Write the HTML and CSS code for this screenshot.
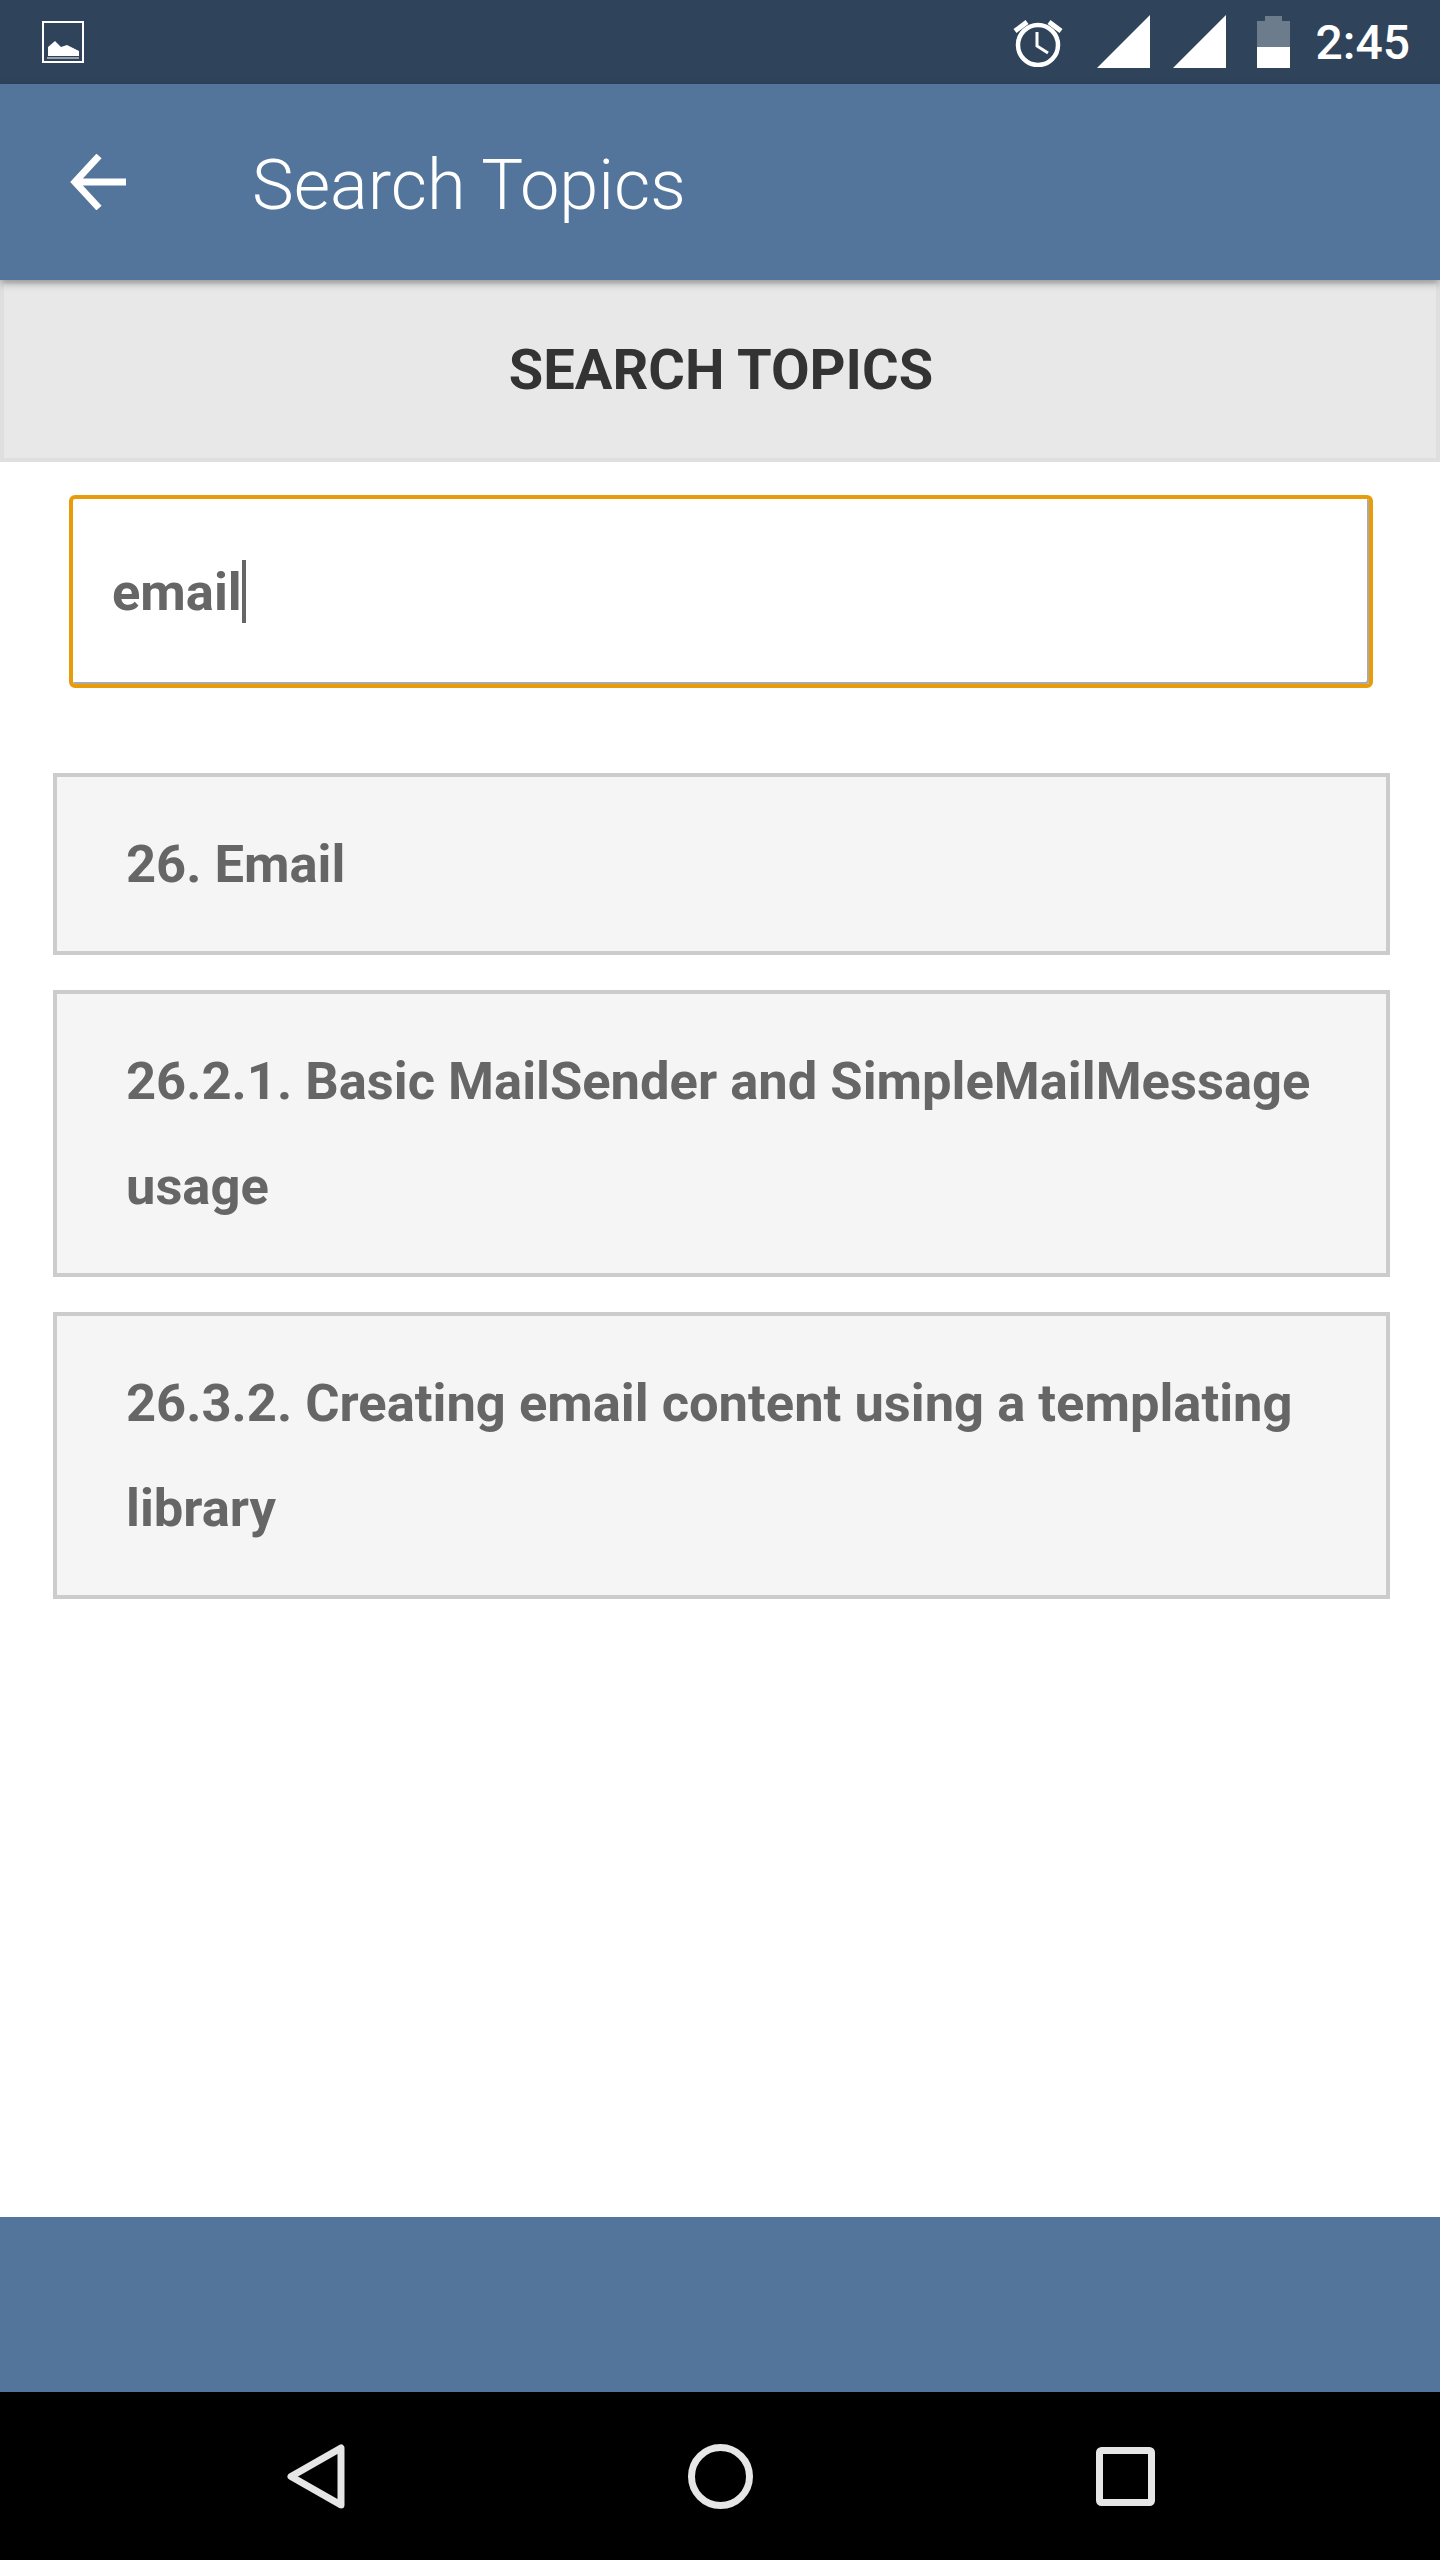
FILE: index.html
```html
<!DOCTYPE html>
<html lang="en">
<head>
  <meta charset="UTF-8">
  <meta name="viewport" content="width=device-width, initial-scale=1.0">
  <title>Search Topics</title>
  <link rel="stylesheet" href="styles.css">
</head>
<body>
  <div class="status-bar">
    <svg class="status-picture" width="42" height="42" viewBox="0 0 42 42">
      <rect x="1" y="1" width="40" height="40" fill="none" stroke="#fff" stroke-width="2"/>
      <path d="M6 35V26L13 20L19 26L25 24L31 27L37 30V35Z" fill="#fff"/>
      <path d="M5 37H37" stroke="#fff" stroke-width="1"/>
    </svg>
    <div class="status-right">
      <svg class="status-alarm" width="50" height="50" viewBox="0 0 50 50">
        <circle cx="25" cy="28" r="20" fill="none" stroke="#fff" stroke-width="4.5"/>
        <path d="M24 15V29L35 36" fill="none" stroke="#fff" stroke-width="3"/>
        <path d="M2 14L14 5M48 14L36 5" stroke="#fff" stroke-width="5"/>
      </svg>
      <svg class="status-signal" width="53" height="53" viewBox="0 0 53 53"><path d="M0 53L53 0V53Z" fill="#fff"/></svg>
      <svg class="status-signal second" width="53" height="53" viewBox="0 0 53 53"><path d="M0 53L53 0V53Z" fill="#fff"/></svg>
      <svg class="status-battery" width="33" height="52" viewBox="0 0 33 52">
        <path d="M8 0H25V5H33V32H0V5H8Z" fill="#fff" opacity="0.3"/>
        <rect y="31" width="33" height="21" fill="#fff"/>
      </svg>
      <span class="status-time">2:45</span>
    </div>
  </div>

  <header class="app-bar">
    <svg class="back-arrow" width="56" height="56" viewBox="0 0 56 56">
      <path d="M56 28H5M29 2L5 28L29 54" fill="none" stroke="#fff" stroke-width="7"/>
    </svg>
    <span class="app-title">Search Topics</span>
  </header>

  <main class="content">
    <h2 class="section-title">SEARCH TOPICS</h2>
    <div class="search-box">
      <span class="search-text">email</span><span class="caret"></span>
    </div>
    <div class="topic-list">
      <div class="topic">26. Email</div>
      <div class="topic">26.2.1. Basic MailSender and SimpleMailMessage usage</div>
      <div class="topic">26.3.2. Creating email content using a templating library</div>
    </div>
  </main>

  <div class="bottom-bar"></div>

  <nav class="nav-bar">
    <svg width="58" height="65" viewBox="0 0 58 65">
      <path d="M54 4V61L4 32.5Z" fill="none" stroke="#e6e6e6" stroke-width="7" stroke-linejoin="round"/>
    </svg>
    <svg width="65" height="65" viewBox="0 0 65 65">
      <circle cx="32.5" cy="32.5" r="29" fill="none" stroke="#e6e6e6" stroke-width="7"/>
    </svg>
    <svg width="59" height="59" viewBox="0 0 59 59">
      <rect x="3.5" y="3.5" width="52" height="52" rx="2" fill="none" stroke="#e6e6e6" stroke-width="7"/>
    </svg>
  </nav>
</body>
</html>
```

FILE: styles.css
```css
* {
  margin: 0;
  padding: 0;
  box-sizing: border-box;
}

body {
  font-family: Roboto, "Liberation Sans", sans-serif;
  width: 1440px;
  height: 2560px;
  display: flex;
  flex-direction: column;
  background: #fff;
  overflow: hidden;
}

.status-bar {
  height: 84px;
  background: #2f445b;
  display: flex;
  align-items: center;
  justify-content: space-between;
  padding: 0 30px 0 42px;
  color: #fff;
}

.status-picture {
  display: block;
}

.status-right {
  display: flex;
  align-items: center;
}

.status-alarm {
  margin-right: 34px;
}

.status-signal {
  margin-bottom: 1px;
}

.status-signal.second {
  margin-left: 23px;
}

.status-battery {
  margin-left: 31px;
}

.status-time {
  margin-left: 26px;
  font-size: 48px;
  font-weight: 500;
}

.app-bar {
  height: 196px;
  background: #53749b;
  display: flex;
  align-items: center;
  padding-left: 70px;
  position: relative;
  box-shadow: 0 3px 8px rgba(0, 0, 0, 0.35);
}

.back-arrow {
  margin-right: 126px;
}

.app-title {
  margin-top: 6px;
  font-size: 70.3px;
  font-weight: 300;
  color: #fff;
}

.content {
  flex: 1;
}

.section-title {
  height: 182px;
  padding: 0 0 2px 2px;
  background: #e8e8e8;
  border: 4px solid #dfdfdf;
  display: flex;
  align-items: center;
  justify-content: center;
  font-size: 56px;
  font-weight: 700;
  color: #333;
}

.search-box {
  height: 193px;
  margin: 33px 67px 0 69px;
  padding-left: 39px;
  border: 4px solid #e99c0a;
  border-radius: 6px;
  box-shadow: inset -2px -2px 0 #aaa;
  display: flex;
  align-items: center;
}

.search-text {
  font-size: 52.5px;
  font-weight: 700;
  color: #666;
}

.caret {
  width: 4px;
  height: 63px;
  background: #666;
}

.topic-list {
  margin: 85px 50px 0 53px;
  display: flex;
  flex-direction: column;
  gap: 35px;
}

.topic {
  background: #f5f5f5;
  border: 4px solid #ccc;
  padding: 34.5px 70px 34.5px 69px;
  font-size: 52.5px;
  font-weight: 700;
  line-height: 105px;
  color: #666;
}

.bottom-bar {
  height: 175px;
  background: #53749b;
}

.nav-bar {
  height: 168px;
  background: #000;
  display: flex;
  align-items: center;
  padding: 0 285px 0 287px;
  justify-content: space-between;
}
```
